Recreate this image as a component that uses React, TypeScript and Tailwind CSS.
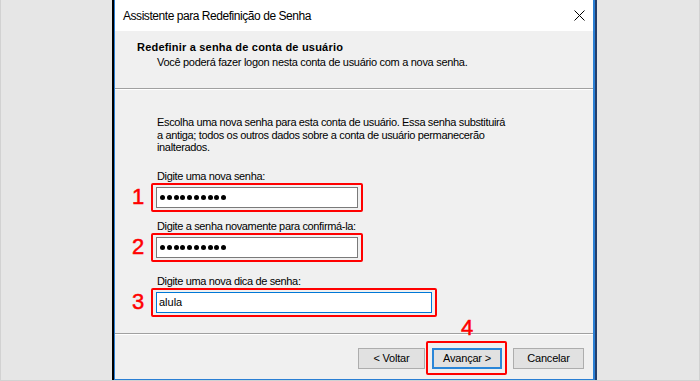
import React from "react";

function Dots() {
  return (
    <div className="flex items-center gap-[1.8px] pl-[3px]">
      {Array.from({ length: 10 }).map((_, i) => (
        <span key={i} className="block w-[5px] h-[5px] rounded-full bg-black" />
      ))}
    </div>
  );
}

function Marca({ n }: { n: string }) {
  return (
    <span className="absolute right-[calc(100%+12px)] top-1/2 -translate-y-1/2 text-[22px] leading-none text-[#ff0000] [-webkit-text-stroke:0.5px_#ff0000]">
      {n}
    </span>
  );
}

function Campo({
  label,
  n,
  largura,
  foco,
  className,
  children,
}: {
  label: string;
  n: string;
  largura: string;
  foco?: boolean;
  className?: string;
  children: React.ReactNode;
}) {
  return (
    <div className={className}>
      <p className="ml-px h-[13px] leading-[13px] mb-[4px]">{label}</p>
      <div className={`relative h-[21px] ${largura}`}>
        <div
          className={`h-full w-full bg-white border flex items-center ${
            foco ? "border-[#0078d7]" : "border-[#7a7a7a]"
          }`}
        >
          {children}
        </div>
        <span className="absolute -left-[5px] -right-[5px] -top-[4px] -bottom-[4px] border-2 border-[#ff0000] rounded-[2px]" />
        <Marca n={n} />
      </div>
    </div>
  );
}

export default function App() {
  return (
    <div className="w-[700px] h-[381px] bg-[#e6e6e6] border-l border-r border-b border-[#d2d2d2] flex pl-[111px] overflow-hidden font-['Liberation_Sans',Arial,sans-serif] text-black">
      <div className="w-[485px] h-[380px] flex border-l-2 border-l-black border-r-2 border-r-[#233e6b]">
        <div className="flex-1 flex flex-col bg-[#f0f0f0] border-l border-r-2 border-b border-[#2a7fd4]">
          {/* barra de título */}
          <div className="h-[31px] bg-white flex items-center justify-between pl-[8px] pr-[8px]">
            <span className="text-[12px] tracking-[-0.45px]">Assistente para Redefinição de Senha</span>
            <svg width="11" height="11" viewBox="0 0 11 11">
              <path d="M0.5 0.5 L10.5 10.5 M10.5 0.5 L0.5 10.5" stroke="#000" strokeWidth="1" />
            </svg>
          </div>

          {/* cabeçalho */}
          <div className="h-[57px] pt-[10px] pl-[22px] text-[11px]">
            <p className="font-bold leading-[13px] tracking-[0.2px]">Redefinir a senha de conta de usuário</p>
            <p className="ml-[20px] mt-[2px] leading-[13px] tracking-[-0.3px]">
              Você poderá fazer logon nesta conta de usuário com a nova senha.
            </p>
          </div>
          <div className="h-px bg-[#a0a0a0]" />
          <div className="h-px bg-white" />

          {/* corpo */}
          <div className="flex-1 pl-[41px] pt-[26px] text-[11px] tracking-[-0.35px]">
            <p className="ml-px leading-[12.5px]">
              Escolha uma nova senha para esta conta de usuário. Essa senha substituirá
              <br />
              a antiga; todos os outros dados sobre a conta de usuário permanecerão
              <br />
              inalterados.
            </p>

            <Campo className="mt-[16px]" label="Digite uma nova senha:" n="1" largura="w-[202px]">
              <Dots />
            </Campo>
            <Campo className="mt-[12px]" label="Digite a senha novamente para confirmá-la:" n="2" largura="w-[202px]">
              <Dots />
            </Campo>
            <Campo className="mt-[17px]" label="Digite uma nova dica de senha:" n="3" largura="w-[276px]" foco>
              <span className="pl-[2px] leading-none tracking-normal">alula</span>
            </Campo>
          </div>

          <div className="h-px bg-[#a0a0a0]" />
          <div className="h-px bg-white" />

          {/* rodapé */}
          <div className="h-[44px] pt-[13px] pr-[9px] flex justify-end items-start text-[11px] tracking-[-0.2px]">
            <button className="w-[67px] h-[21px] bg-[#e1e1e1] border border-[#adadad]">&lt; Voltar</button>
            <div className="relative ml-[7px]">
              <button className="w-[70px] h-[21px] bg-[#e1e1e1] border-2 border-[#2a86d8]">Avançar &gt;</button>
              <span className="absolute -left-[6px] -right-[5px] -top-[7px] -bottom-[6px] border-2 border-[#ff0000] rounded-[2px]" />
              <span className="absolute left-1/2 -translate-x-1/2 bottom-[calc(100%+9px)] text-[22px] leading-none text-[#ff0000] [-webkit-text-stroke:0.5px_#ff0000]">
                4
              </span>
            </div>
            <button className="ml-[11px] w-[71px] h-[21px] bg-[#e1e1e1] border border-[#adadad]">Cancelar</button>
          </div>
        </div>
      </div>
    </div>
  );
}
